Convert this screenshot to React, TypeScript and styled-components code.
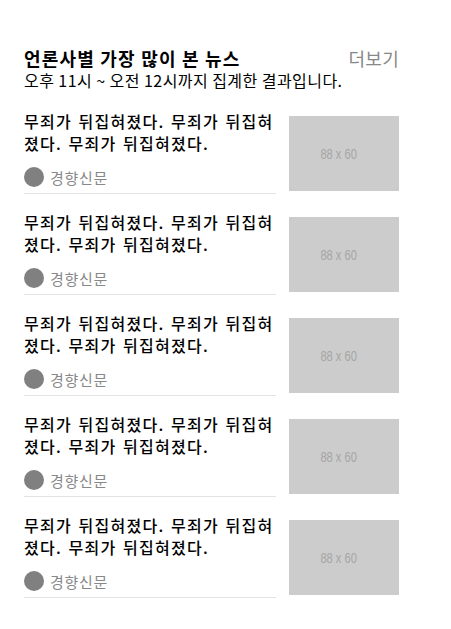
import React from 'react'
import styled, { createGlobalStyle } from 'styled-components'

const GlobalStyle = createGlobalStyle`
  body {
    margin: 0;
    background: #ffffff;
    font-family: 'Noto Sans CJK KR', 'Noto Sans', sans-serif;
    color: #000000;
  }
`

const Section = styled.section`
  width: 375px;
  padding: 46px 0 0 24px;
`

const HeaderRow = styled.div`
  display: flex;
  justify-content: space-between;
  align-items: center;
`

const Title = styled.h2`
  margin: 0;
  font-size: 18px;
  line-height: 24px;
  font-weight: 700;
  letter-spacing: 1.2px;
`

const MoreLink = styled.a`
  font-size: 18px;
  line-height: 24px;
  color: #888888;
  text-decoration: none;
  letter-spacing: 0.3px;
`

const Caption = styled.p`
  margin: 0 0 20px;
  font-size: 16px;
  line-height: 20px;
  letter-spacing: 0.45px;
`

const List = styled.ul`
  list-style: none;
  margin: 0;
  padding: 0;
  display: flex;
  flex-direction: column;
  gap: 17px;
`

const Item = styled.li`
  display: flex;
  align-items: flex-start;
  justify-content: space-between;
`

const Body = styled.div`
  width: 252px;
  border-bottom: 1px solid #e3e3e3;
  padding-bottom: 4px;
`

const Headline = styled.div`
  font-size: 16px;
  line-height: 22px;
  font-weight: 500;
  letter-spacing: 1.3px;
  word-spacing: 1.5px;
`

const Press = styled.div`
  display: flex;
  align-items: center;
  gap: 6px;
  margin-top: 11px;
  height: 24px;
`

const Logo = styled.span`
  width: 20px;
  height: 20px;
  border-radius: 50%;
  background: #808080;
`

const PressName = styled.span`
  font-size: 15px;
  color: #888888;
  letter-spacing: 0.7px;
`

const Thumb = styled.div`
  width: 110px;
  height: 75px;
  margin-top: 6px;
  background: #cccccc;
  display: flex;
  align-items: center;
  justify-content: center;
  padding-right: 10px;
  box-sizing: border-box;
`

const ThumbLabel = styled.span`
  font-family: 'Liberation Sans', Arial, sans-serif;
  font-size: 15px;
  color: #a5a5a5;
  transform: scaleX(0.74);
  white-space: nowrap;
`

const items = Array.from({ length: 5 }, (_, i) => ({
  id: i,
  headline: '무죄가 뒤집혀졌다. 무죄가 뒤집혀졌다. 무죄가 뒤집혀졌다.',
  press: '경향신문',
}))

const App: React.FC = () => (
  <>
    <GlobalStyle />
    <Section>
      <HeaderRow>
        <Title>언론사별 가장 많이 본 뉴스</Title>
        <MoreLink href="#">더보기</MoreLink>
      </HeaderRow>
      <Caption>오후 11시 ~ 오전 12시까지 집계한 결과입니다.</Caption>
      <List>
        {items.map((item) => (
          <Item key={item.id}>
            <Body>
              <Headline>{item.headline}</Headline>
              <Press>
                <Logo />
                <PressName>{item.press}</PressName>
              </Press>
            </Body>
            <Thumb>
              <ThumbLabel>88 x 60</ThumbLabel>
            </Thumb>
          </Item>
        ))}
      </List>
    </Section>
  </>
)

export default App
